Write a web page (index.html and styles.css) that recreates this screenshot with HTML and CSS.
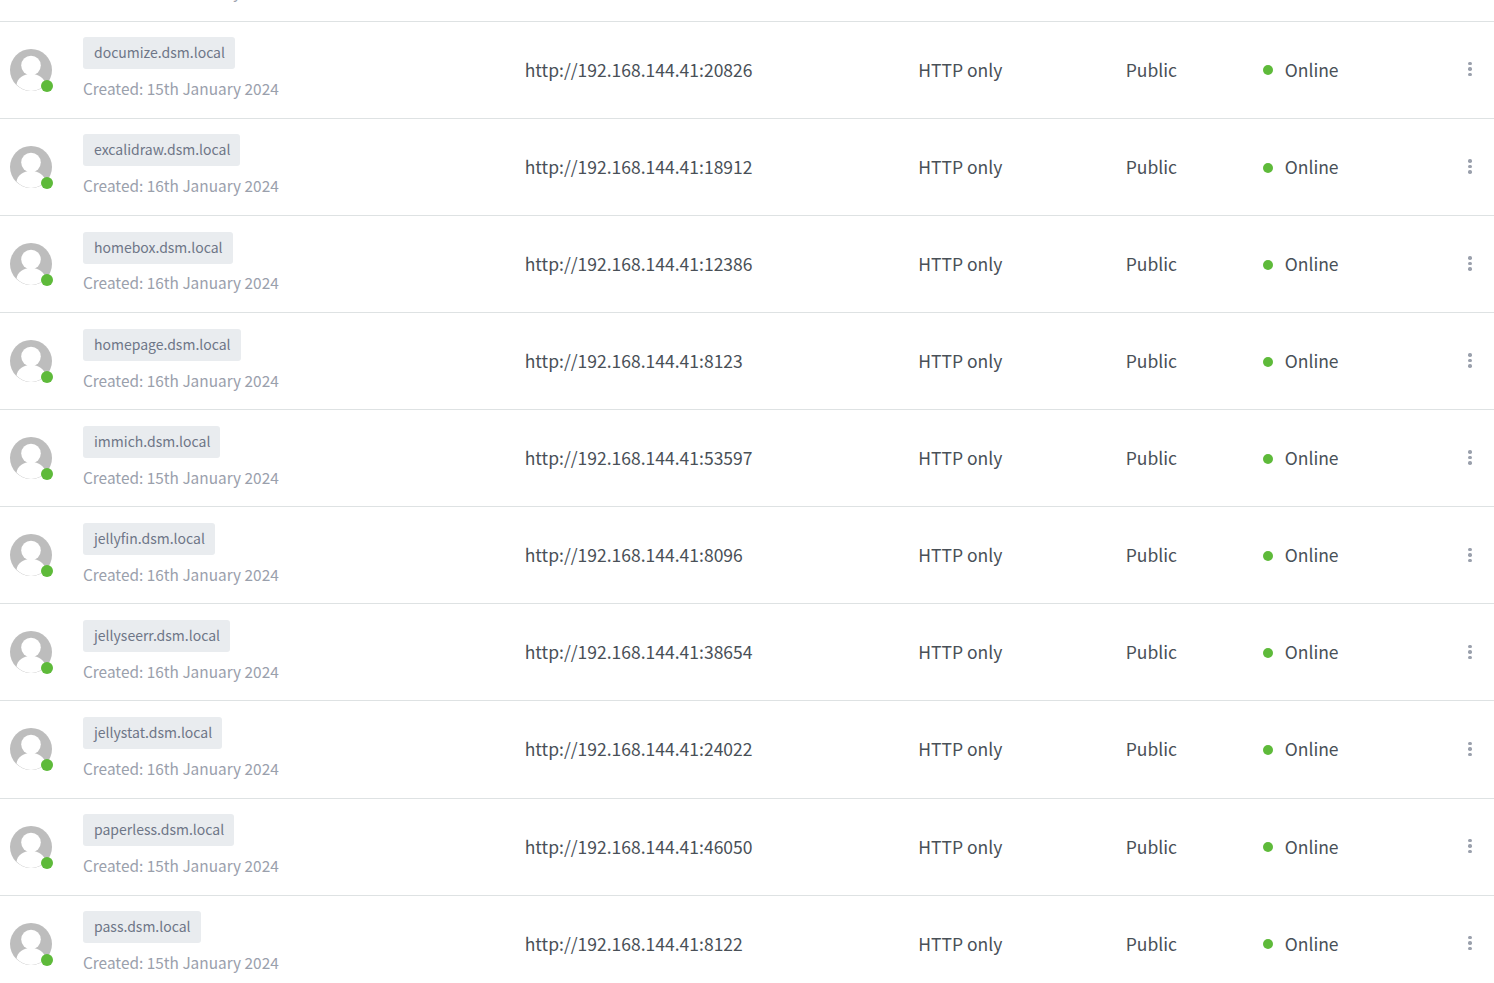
FILE: index.html
```html
<!doctype html>
<html lang="en">
<head>
	<meta charset="utf-8">
	<title>Proxy Hosts</title>
	<link rel="stylesheet" href="styles.css">
</head>
<body>

<svg class="defs" width="0" height="0">
	<symbol id="avatar" viewBox="0 0 42 42">
		<circle cx="21" cy="21" r="21" fill="#bdbdbd"/>
		<circle cx="21" cy="16.5" r="9.8" fill="#fff"/>
		<path d="M6.5 35.5C7.5 29.5 13 25 21 25S34.5 29.5 35.5 35.5A21 21 0 0 1 21 42A21 21 0 0 1 6.5 35.5Z" fill="#fff"/>
	</symbol>
</svg>

<div class="list">

	<div class="row">
		<div class="host">
			<div class="user"><svg class="pic"><use href="#avatar"/></svg><i class="badge"></i></div>
			<div class="names"><span class="tag">dashboard.dsm.local</span><div class="made">Created: 15th January 2024</div></div>
		</div>
		<div>http://192.168.144.41:8080</div><div>HTTP only</div><div>Public</div>
		<div class="state"><i class="dot"></i>Online</div>
		<div class="menu"><i></i><i></i><i></i></div>
	</div>

	<div class="row">
		<div class="host">
			<div class="user"><svg class="pic"><use href="#avatar"/></svg><i class="badge"></i></div>
			<div class="names"><span class="tag">documize.dsm.local</span><div class="made">Created: 15th January 2024</div></div>
		</div>
		<div>http://192.168.144.41:20826</div><div>HTTP only</div><div>Public</div>
		<div class="state"><i class="dot"></i>Online</div>
		<div class="menu"><i></i><i></i><i></i></div>
	</div>

	<div class="row">
		<div class="host">
			<div class="user"><svg class="pic"><use href="#avatar"/></svg><i class="badge"></i></div>
			<div class="names"><span class="tag">excalidraw.dsm.local</span><div class="made">Created: 16th January 2024</div></div>
		</div>
		<div>http://192.168.144.41:18912</div><div>HTTP only</div><div>Public</div>
		<div class="state"><i class="dot"></i>Online</div>
		<div class="menu"><i></i><i></i><i></i></div>
	</div>

	<div class="row">
		<div class="host">
			<div class="user"><svg class="pic"><use href="#avatar"/></svg><i class="badge"></i></div>
			<div class="names"><span class="tag">homebox.dsm.local</span><div class="made">Created: 16th January 2024</div></div>
		</div>
		<div>http://192.168.144.41:12386</div><div>HTTP only</div><div>Public</div>
		<div class="state"><i class="dot"></i>Online</div>
		<div class="menu"><i></i><i></i><i></i></div>
	</div>

	<div class="row">
		<div class="host">
			<div class="user"><svg class="pic"><use href="#avatar"/></svg><i class="badge"></i></div>
			<div class="names"><span class="tag">homepage.dsm.local</span><div class="made">Created: 16th January 2024</div></div>
		</div>
		<div>http://192.168.144.41:8123</div><div>HTTP only</div><div>Public</div>
		<div class="state"><i class="dot"></i>Online</div>
		<div class="menu"><i></i><i></i><i></i></div>
	</div>

	<div class="row">
		<div class="host">
			<div class="user"><svg class="pic"><use href="#avatar"/></svg><i class="badge"></i></div>
			<div class="names"><span class="tag">immich.dsm.local</span><div class="made">Created: 15th January 2024</div></div>
		</div>
		<div>http://192.168.144.41:53597</div><div>HTTP only</div><div>Public</div>
		<div class="state"><i class="dot"></i>Online</div>
		<div class="menu"><i></i><i></i><i></i></div>
	</div>

	<div class="row">
		<div class="host">
			<div class="user"><svg class="pic"><use href="#avatar"/></svg><i class="badge"></i></div>
			<div class="names"><span class="tag">jellyfin.dsm.local</span><div class="made">Created: 16th January 2024</div></div>
		</div>
		<div>http://192.168.144.41:8096</div><div>HTTP only</div><div>Public</div>
		<div class="state"><i class="dot"></i>Online</div>
		<div class="menu"><i></i><i></i><i></i></div>
	</div>

	<div class="row">
		<div class="host">
			<div class="user"><svg class="pic"><use href="#avatar"/></svg><i class="badge"></i></div>
			<div class="names"><span class="tag">jellyseerr.dsm.local</span><div class="made">Created: 16th January 2024</div></div>
		</div>
		<div>http://192.168.144.41:38654</div><div>HTTP only</div><div>Public</div>
		<div class="state"><i class="dot"></i>Online</div>
		<div class="menu"><i></i><i></i><i></i></div>
	</div>

	<div class="row">
		<div class="host">
			<div class="user"><svg class="pic"><use href="#avatar"/></svg><i class="badge"></i></div>
			<div class="names"><span class="tag">jellystat.dsm.local</span><div class="made">Created: 16th January 2024</div></div>
		</div>
		<div>http://192.168.144.41:24022</div><div>HTTP only</div><div>Public</div>
		<div class="state"><i class="dot"></i>Online</div>
		<div class="menu"><i></i><i></i><i></i></div>
	</div>

	<div class="row">
		<div class="host">
			<div class="user"><svg class="pic"><use href="#avatar"/></svg><i class="badge"></i></div>
			<div class="names"><span class="tag">paperless.dsm.local</span><div class="made">Created: 15th January 2024</div></div>
		</div>
		<div>http://192.168.144.41:46050</div><div>HTTP only</div><div>Public</div>
		<div class="state"><i class="dot"></i>Online</div>
		<div class="menu"><i></i><i></i><i></i></div>
	</div>

	<div class="row">
		<div class="host">
			<div class="user"><svg class="pic"><use href="#avatar"/></svg><i class="badge"></i></div>
			<div class="names"><span class="tag">pass.dsm.local</span><div class="made">Created: 15th January 2024</div></div>
		</div>
		<div>http://192.168.144.41:8122</div><div>HTTP only</div><div>Public</div>
		<div class="state"><i class="dot"></i>Online</div>
		<div class="menu"><i></i><i></i><i></i></div>
	</div>

</div>

</body>
</html>
```

FILE: styles.css
```css
*{ padding: 0; margin: 0; box-sizing: border-box }
html{ overflow: hidden; height: 100% }
body{ background: #fff; color: #495057; font-family: "Noto Sans CJK SC", "Source Sans Pro", "Open Sans", sans-serif; font-size: 17.5px; line-height: 24px; overflow: hidden; height: 100% }
i{ display: block; font-style: normal }
.defs{ position: absolute }

.list{ margin-top: -75.46px }
.row{ display: grid; grid-template-columns: 524.75px 393.5px 207.5px 137px 1fr 48px; align-items: center; height: 97.11px; border-bottom: 1px solid #dee2e3 }

.host{ display: flex; align-items: center; padding-left: 10px }
.user{ position: relative; width: 42px; height: 42px; margin-right: 31px }
.pic{ display: block; width: 42px; height: 42px }
.badge{ position: absolute; right: -1px; bottom: -1px; width: 12px; height: 12px; border-radius: 50%; background: #5eba3a }

.names{ padding-bottom: 1.79px }
.tag{ display: inline-block; height: 32px; padding: 0 10px 0 11px; border-radius: 3px; background: #e9ecef; color: #6e7687; font-size: 14px; line-height: 31px; vertical-align: top }
.made{ margin-top: 6.89px; color: #9aa0ac; font-size: 15.4px; line-height: 24px }

.state{ display: flex; align-items: center }
.dot{ width: 10px; height: 10px; margin: 1.5px 12px 0 0; border-radius: 50%; background: #5eba3a }

.menu{ display: flex; flex-direction: column; align-items: center; gap: 2px; width: 48px; padding-bottom: 1px }
.menu i{ width: 3.5px; height: 3.5px; border-radius: 50%; background: #9aa0ac }
```
